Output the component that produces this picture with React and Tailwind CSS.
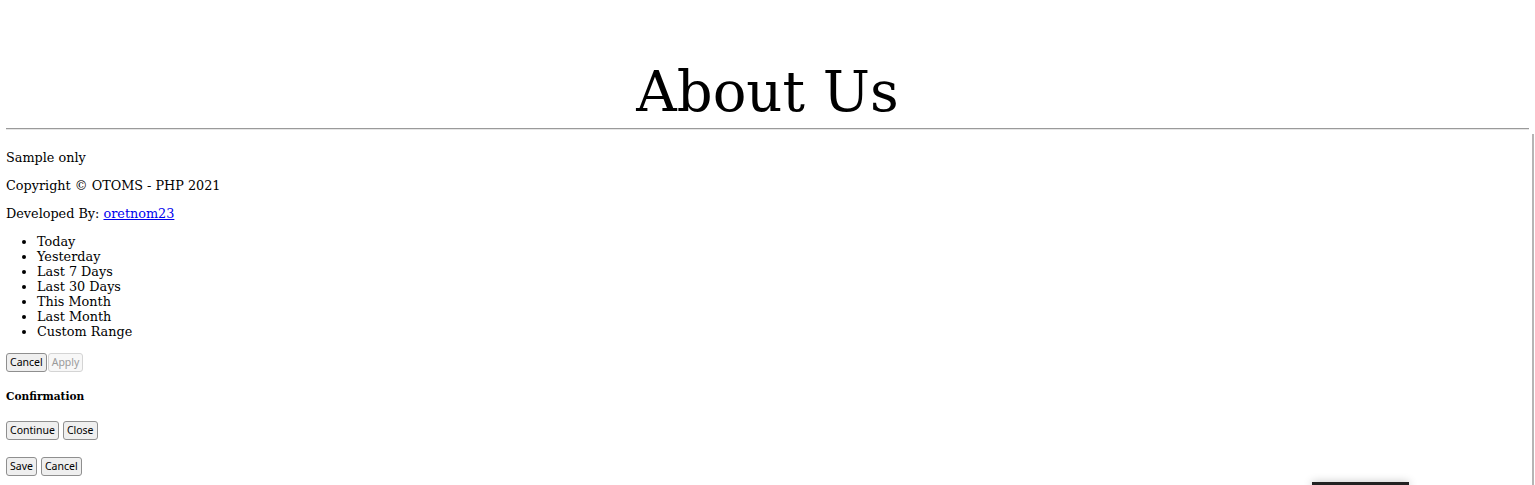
const ranges = ["Today", "Yesterday", "Last 7 Days", "Last 30 Days", "This Month", "Last Month", "Custom Range"];

function Btn({ children, disabled }) {
  return (
    <button
      disabled={disabled}
      className={`h-[19px] rounded-[3px] border px-[3px] font-['Noto_Sans',sans-serif] text-[10.5px] leading-none ${
        disabled
          ? "border-[#d4d4d4] bg-[#f7f7f7] text-[#9a9a9a]"
          : "border-[#8f8f8f] bg-[#efefef] text-black"
      }`}
    >
      {children}
    </button>
  );
}

export default function App() {
  return (
    <div className="relative h-[485px] overflow-hidden bg-white px-[6px] font-['DejaVu_Serif',serif] text-[12.8px] leading-[15px] text-black">
      <h1 className="pt-[58px] text-center text-[56px] leading-[67px]">About Us</h1>
      <hr className="mt-[3px] border-t border-b border-t-[#9a9a9a] border-b-[#e6e6e6]" />

      <div className="pt-[20px]">
        <p>Sample only</p>
        <p className="mt-[13px]">Copyright © OTOMS - PHP 2021</p>
        <p className="mt-[13px]">
          Developed By:{" "}
          <a href="#" className="text-[#0000ee] underline">
            oretnom23
          </a>
        </p>
        <ul className="mt-[13px] list-disc pl-[31px]">
          {ranges.map((r) => (
            <li key={r}>{r}</li>
          ))}
        </ul>
        <div className="mt-[14px] flex gap-px">
          <Btn>Cancel</Btn>
          <Btn disabled>Apply</Btn>
        </div>
        <h5 className="mt-[17px] text-[10.6px] font-bold">Confirmation</h5>
        <div className="mt-[17px] flex gap-[4px]">
          <Btn>Continue</Btn>
          <Btn>Close</Btn>
        </div>
        <div className="mt-[17px] flex gap-[4px]">
          <Btn>Save</Btn>
          <Btn>Cancel</Btn>
        </div>
      </div>

      {/* panel edge on the right */}
      <div className="absolute right-[1px] top-[134px] h-[351px] w-[2px] bg-[#b5b5b5]" />
      {/* toast peeking from the bottom */}
      <div className="absolute left-[1312px] top-[482px] h-[6px] w-[97px] bg-[#222] shadow-[0_0_8px_rgba(0,0,0,0.25)]" />
    </div>
  );
}
